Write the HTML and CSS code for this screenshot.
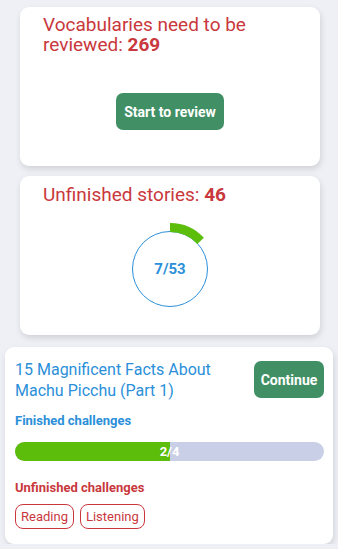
FILE: index.html
```html
<!DOCTYPE html>
<html>
<head>
<meta charset="utf-8">
<link rel="stylesheet" href="styles.css">
</head>
<body>
<div class="page">
  <section class="card card-vocab">
    <h2 class="card-title">Vocabularies need to be reviewed: <b>269</b></h2>
    <div class="center">
      <button class="btn btn-review">Start to review</button>
    </div>
  </section>
  <section class="card card-stories">
    <h2 class="card-title">Unfinished stories: <b>46</b></h2>
    <div class="center">
      <div class="ring">
        <svg width="92" height="92" viewBox="0 0 92 92">
          <circle cx="46" cy="46" r="37.5" fill="none" stroke="#2b8fd9" stroke-width="1"/>
          <path d="M46 4.5 A41.5 41.5 0 0 1 76.6 17.9" fill="none" stroke="#5cbd0a" stroke-width="9"/>
        </svg>
        <span class="ring-label">7/53</span>
      </div>
    </div>
  </section>
  <section class="card card-story">
    <div class="story-head">
      <h3 class="story-title">15 Magnificent Facts About Machu Picchu (Part 1)</h3>
      <button class="btn btn-continue">Continue</button>
    </div>
    <div class="label label-blue">Finished challenges</div>
    <div class="bar">
      <div class="bar-fill" style="width:50%"></div>
      <span class="bar-text">2/4</span>
    </div>
    <div class="label label-red">Unfinished challenges</div>
    <div class="chips">
      <span class="chip">Reading</span>
      <span class="chip">Listening</span>
    </div>
  </section>
</div>
</body>
</html>
```
FILE: styles.css
```css
html, body {
  margin: 0;
  padding: 0;
  background: #eef0f5;
  font-family: Roboto, "Liberation Sans", sans-serif;
}
.page {
  display: flex;
  flex-direction: column;
  padding-top: 7px;
}
.card {
  background: #fff;
  border-radius: 9px;
  box-shadow: 1px 3px 6px rgba(0, 0, 0, 0.13);
  box-sizing: border-box;
}
.card-vocab, .card-stories {
  margin-left: 20px;
  width: 300px;
  height: 159px;
  padding: 8px 20px 0 23px;
}
.card-stories {
  margin-top: 10px;
  padding-top: 9px;
}
.card-title {
  margin: 0;
  font-size: 19px;
  line-height: 20px;
  font-weight: 400;
  color: #c9383c;
}
.card-title b {
  font-weight: 700;
}
.center {
  display: flex;
  justify-content: center;
  padding-right: 3px;
}
.card-vocab .center {
  margin-top: 38px;
}
.btn {
  border: none;
  background: #418f65;
  color: #fff;
  font-family: Roboto, "Liberation Sans", sans-serif;
  font-weight: 700;
  border-radius: 7px;
  padding: 0;
}
.btn-review {
  width: 108px;
  height: 37px;
  font-size: 14px;
}
.card-stories .center {
  margin-top: 18px;
}
.ring {
  position: relative;
  width: 92px;
  height: 92px;
}
.ring svg {
  display: block;
}
.ring-label {
  position: absolute;
  left: 0;
  right: 0;
  top: 46px;
  transform: translateY(-50%);
  text-align: center;
  font-size: 15px;
  font-weight: 700;
  color: #2b8fd9;
}
.card-story {
  margin-top: 12px;
  margin-left: 5px;
  width: 328px;
  height: 197px;
  padding: 12px 9px 0 10px;
}
.story-head {
  display: flex;
  justify-content: space-between;
  align-items: flex-start;
}
.story-title {
  margin: 0;
  font-size: 16px;
  line-height: 21px;
  font-weight: 400;
  color: #2b8fd9;
  width: 220px;
}
.btn-continue {
  width: 70px;
  height: 37px;
  font-size: 14px;
  margin-top: 2px;
}
.label {
  font-size: 13px;
  font-weight: 700;
  line-height: 16px;
}
.label-blue {
  color: #2b8fd9;
  margin-top: 12px;
}
.label-red {
  color: #c9383c;
  margin-top: 19px;
}
.bar {
  position: relative;
  margin-top: 13px;
  height: 19px;
  border-radius: 10px;
  background: #c9cfe6;
  overflow: hidden;
}
.bar-fill {
  height: 100%;
  background: #5cbd0a;
}
.bar-text {
  position: absolute;
  left: 0;
  right: 0;
  top: 0;
  line-height: 19px;
  text-align: center;
  color: #fff;
  font-size: 13px;
  font-weight: 700;
}
.chips {
  display: flex;
  gap: 6px;
  margin-top: 8px;
}
.chip {
  border: 1px solid #c9383c;
  border-radius: 8px;
  color: #c9383c;
  font-size: 13px;
  height: 25px;
  line-height: 23px;
  padding: 0 5px;
  box-sizing: border-box;
}
```
